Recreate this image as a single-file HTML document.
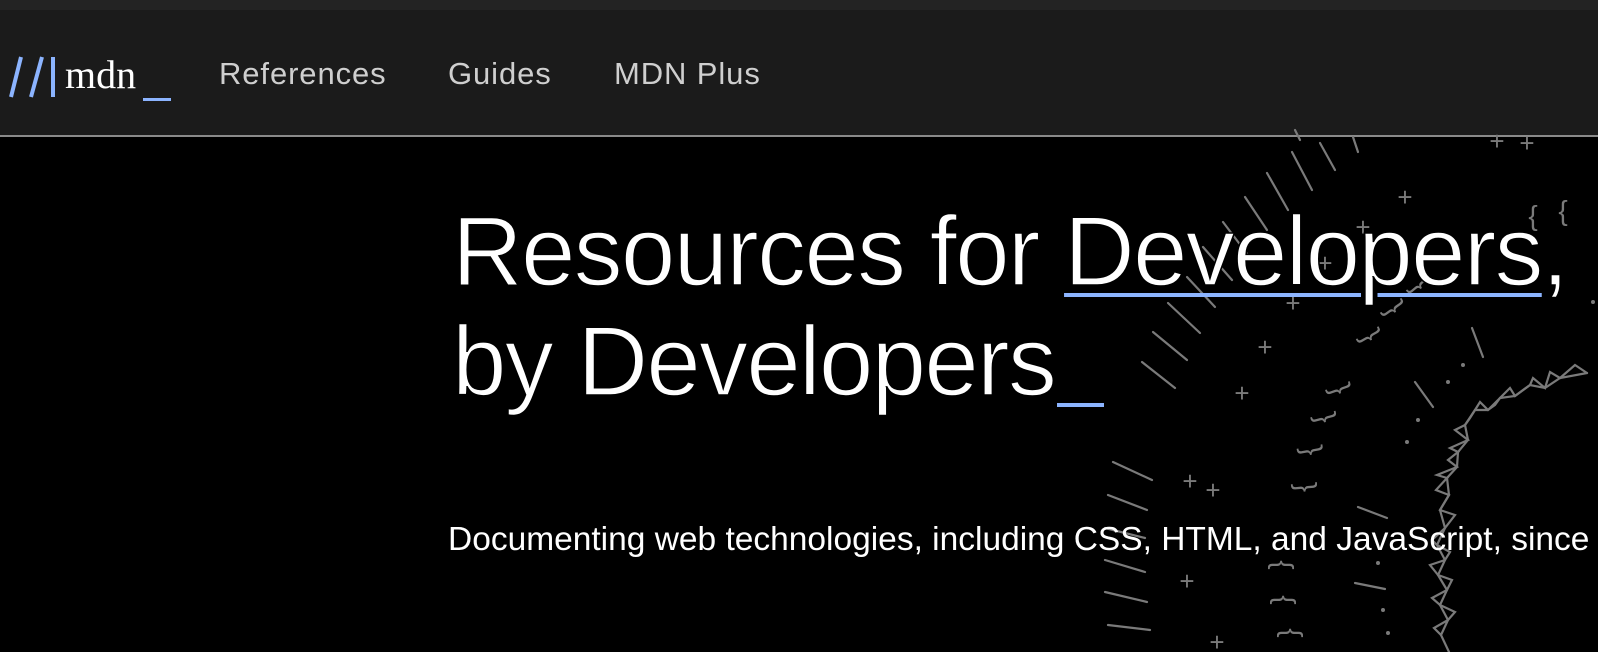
<!DOCTYPE html>
<html><head><meta charset="utf-8"><style>
*{margin:0;padding:0;box-sizing:border-box}
html,body{width:1598px;height:652px;overflow:hidden;background:#000;font-family:"Liberation Sans",sans-serif}
.top{position:absolute;left:0;top:0;width:1598px;height:10px;background:#232323}
.hdr{position:absolute;left:0;top:10px;width:1598px;height:127px;background:#1b1b1b;border-bottom:2px solid #8a8a8a}
.nav{position:absolute;top:56px;font-size:31px;color:#cfcfcf;letter-spacing:0.9px}
.h1{position:absolute;left:452px;color:#fff;font-size:98px;line-height:110px;white-space:nowrap;-webkit-text-stroke:1.6px #000;letter-spacing:-1.8px}
.ul{text-decoration:underline;text-decoration-color:#8cb4ff;text-decoration-thickness:4px;text-underline-offset:8px;text-decoration-skip-ink:auto}
.us{display:inline-block;width:47px;height:4px;background:#8cb4ff;vertical-align:-12px;margin-left:2px}
.sub{position:absolute;left:448px;top:521px;width:1150px;overflow:hidden;color:#fff;font-size:33.5px;white-space:nowrap}
</style></head><body>
<div class="top"></div>
<div class="hdr"></div>
<svg style="position:absolute;left:0;top:0" width="200" height="137">
<g stroke="#8cb4ff" stroke-width="4" fill="none">
<line x1="21" y1="57" x2="11" y2="97"/>
<line x1="42" y1="57" x2="31" y2="97"/>
<line x1="53" y1="57" x2="53" y2="97"/>
</g>
<text x="65" y="88" font-family="Liberation Serif,serif" font-size="40" fill="#fff">mdn</text>
<rect x="143" y="98" width="28" height="3" fill="#8cb4ff"/>
</svg>
<div class="nav" style="left:219px">References</div>
<div class="nav" style="left:448px">Guides</div>
<div class="nav" style="left:614px">MDN Plus</div>

<svg style="position:absolute;left:0;top:0" width="1598" height="652">
<g stroke="#7a7a7a" stroke-width="2.2" stroke-linecap="round" fill="none">
<line x1="1292" y1="152" x2="1312" y2="190"/>
<line x1="1320" y1="143" x2="1335" y2="170"/>
<line x1="1353" y1="137" x2="1358" y2="152"/>
<line x1="1267" y1="173" x2="1288" y2="210"/>
<line x1="1245" y1="197" x2="1267" y2="230"/>
<line x1="1223" y1="222" x2="1248" y2="255"/>
<line x1="1203" y1="247" x2="1232" y2="280"/>
<line x1="1187" y1="277" x2="1215" y2="307"/>
<line x1="1168" y1="303" x2="1200" y2="333"/>
<line x1="1153" y1="332" x2="1187" y2="360"/>
<line x1="1142" y1="362" x2="1175" y2="388"/>
<line x1="1113" y1="462" x2="1152" y2="480"/>
<line x1="1108" y1="495" x2="1147" y2="510"/>
<line x1="1105" y1="528" x2="1145" y2="538"/>
<line x1="1105" y1="560" x2="1145" y2="572"/>
<line x1="1105" y1="592" x2="1147" y2="602"/>
<line x1="1108" y1="625" x2="1150" y2="630"/>
<line x1="1472" y1="328" x2="1483" y2="357"/>
<line x1="1415" y1="382" x2="1433" y2="407"/>
<line x1="1358" y1="507" x2="1387" y2="518"/>
<line x1="1355" y1="583" x2="1385" y2="589"/>
<line x1="1295" y1="130" x2="1300" y2="140"/>
<polyline points="1587,373 1560,378 1545,388 1530,385 1515,396 1500,398 1488,410 1475,410 1465,425 1468,440 1458,452 1457,467 1447,478 1449,495 1440,510 1445,528 1437,545 1445,560 1438,575 1447,590 1440,605 1448,620 1441,635 1449,652"/>
<polyline points="1587,373 1575,365 1560,378 1550,372 1545,388 1533,378 1530,385 1515,396 1510,388 1500,398 1495,405 1488,410 1480,402 1475,410 1470,418 1465,425 1455,430 1468,440 1450,448 1458,452 1448,460 1457,467 1437,475 1447,478 1436,490 1449,495 1440,510 1455,515 1445,528 1432,540 1437,545 1450,552 1445,560 1430,565 1438,575 1452,580 1447,590 1432,598 1440,605 1455,612 1448,620 1434,628 1441,635"/>
</g>
<g fill="#7a7a7a" font-family="Liberation Sans,sans-serif" font-size="26" text-anchor="middle">
<text x="1405" y="206">+</text><text x="1363" y="236">+</text><text x="1325" y="272">+</text>
<text x="1293" y="312">+</text><text x="1265" y="356">+</text><text x="1242" y="402">+</text>
<text x="1190" y="490">+</text><text x="1213" y="499">+</text><text x="1187" y="590">+</text>
<text x="1217" y="651">+</text><text x="1527" y="152">+</text><text x="1497" y="150">+</text>
</g>
<g fill="#7a7a7a" font-family="Liberation Sans,sans-serif" font-size="28" text-anchor="middle">
<text transform="translate(1363,340) rotate(60)" >}</text>
<text transform="translate(1332,392) rotate(70)">}</text>
<text transform="translate(1317,420) rotate(75)">}</text>
<text transform="translate(1303,452) rotate(80)">}</text>
<text transform="translate(1297,488) rotate(85)">}</text>
<text transform="translate(1288,565) rotate(-90)">}</text>
<text transform="translate(1290,600) rotate(-90)">}</text>
<text transform="translate(1297,633) rotate(-90)">}</text>
<text transform="translate(1387,313) rotate(55)">}</text>
<text transform="translate(1413,290) rotate(50)">}</text>
<text x="1533" y="225">{</text><text x="1563" y="220">{</text>
</g>
<g fill="#7a7a7a">
<circle cx="1463" cy="365" r="2"/><circle cx="1448" cy="382" r="2"/><circle cx="1418" cy="420" r="2"/>
<circle cx="1407" cy="442" r="2"/><circle cx="1378" cy="563" r="2"/><circle cx="1383" cy="610" r="2"/>
<circle cx="1388" cy="633" r="2"/><circle cx="1593" cy="302" r="2"/>
</g>
</svg>

<div class="h1" style="top:196px">Resources for <span class="ul">Developers</span>,</div>
<div class="h1" style="top:306px">by Developers<span class="us"></span></div>
<div class="sub">Documenting web technologies, including CSS, HTML, and JavaScript, since 2005.</div>
</body></html>
